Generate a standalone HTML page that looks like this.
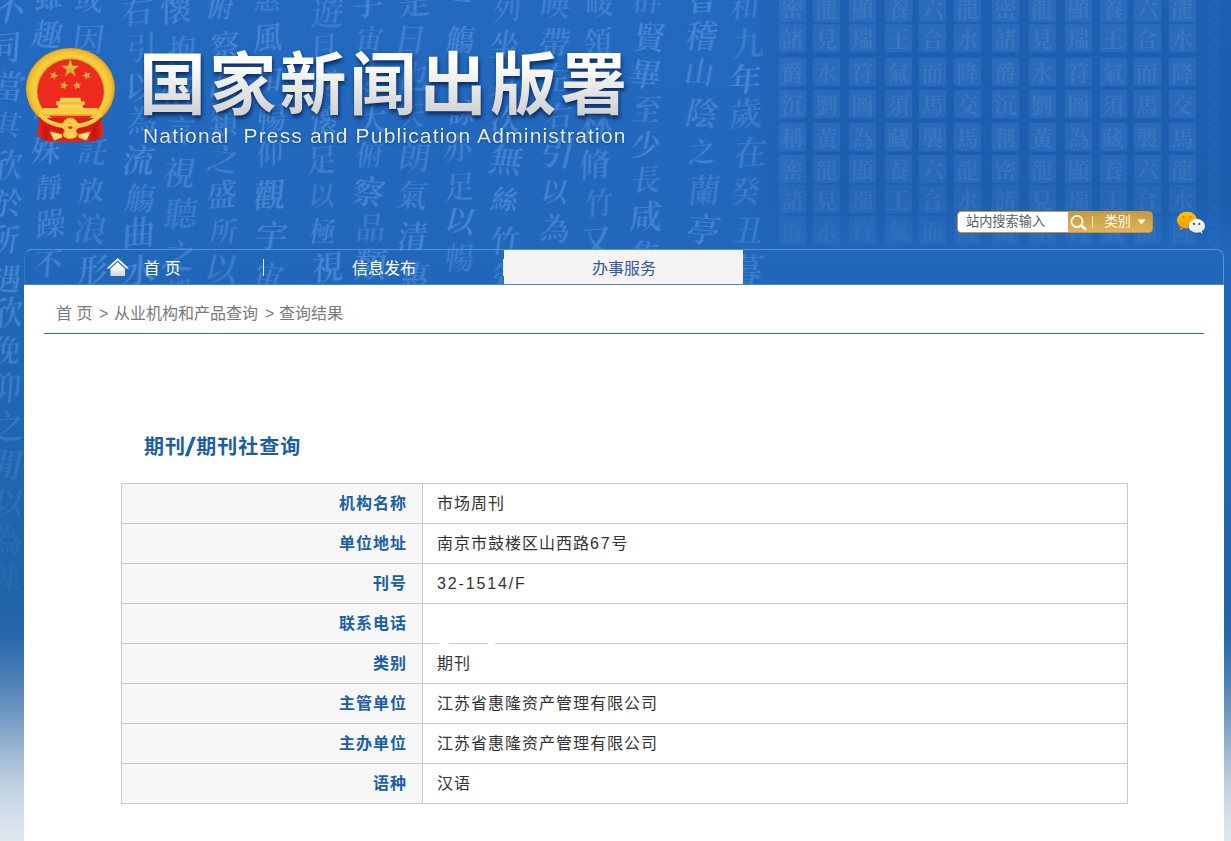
<!DOCTYPE html>
<html lang="zh-CN">
<head>
<meta charset="utf-8">
<title>国家新闻出版署</title>
<style>
*{box-sizing:border-box;margin:0;padding:0}
html,body{width:1231px;height:841px;overflow:hidden;background:#2065b8}
body{font-family:"Liberation Sans","Noto Sans CJK SC",sans-serif;position:relative;color:#333}
#bg{position:absolute;left:0;top:0;width:1231px;height:841px;overflow:hidden;
 background:linear-gradient(to bottom,#2369bf 0px,#2167ba 250px,#2065b0 450px,#2163a9 605px,#2766aa 632px,#3872b0 657px,#5384b8 686px,#7299c3 715px,#93b0cf 743px,#b2c7dc 772px,#cbd8e6 800px,#e1e7f0 841px)}
#shade{position:absolute;left:750px;top:0;width:481px;height:250px;background:linear-gradient(to right,rgba(10,50,120,0),rgba(10,50,120,.18) 12%,rgba(10,50,120,.18));-webkit-mask-image:linear-gradient(to bottom,#000 80%,transparent);mask-image:linear-gradient(to bottom,#000 80%,transparent)}
.c{position:absolute;width:34px;height:38px;font-style:normal;font-family:"Noto Serif CJK TC","Noto Serif CJK SC",serif;font-weight:600;line-height:38px;color:#78aff5;text-align:center;filter:blur(.7px)}
.seal{position:absolute;width:27px;height:28px;border-radius:2px;background:rgba(110,165,240,.17);box-shadow:0 0 2px 1px rgba(80,140,220,.10);font-family:"Noto Serif CJK TC","Noto Serif CJK SC",serif;font-weight:700;font-size:22px;line-height:27px;text-align:center;color:rgba(190,215,250,.11);overflow:hidden;filter:blur(.45px)}
#logo{position:absolute;left:24px;top:46px}
#title{position:absolute;left:139px;top:37.5px;font-size:67px;font-weight:700;letter-spacing:3.2px;transform:scaleY(1.02);transform-origin:0 77px;line-height:96px;white-space:nowrap;
 background:linear-gradient(to bottom,#ffffff 26%,#cbcbcb 86%);-webkit-background-clip:text;background-clip:text;color:#f2f2f2;-webkit-text-fill-color:transparent;
 filter:drop-shadow(1px 3px 2px rgba(0,15,60,.72))}
#sub{position:absolute;left:143px;top:122px;font-size:21px;letter-spacing:1.175px;line-height:28px;white-space:pre;background:linear-gradient(to bottom,#ffffff 30%,#d2d6dc 78%);-webkit-background-clip:text;background-clip:text;color:#f2f2f2;-webkit-text-fill-color:transparent;filter:drop-shadow(0 1px 1px rgba(0,20,70,.4))}
#search{position:absolute;left:957px;top:211px;width:196px;height:22px;border-radius:4px;background:linear-gradient(to bottom,#c89b3f,#e2b356);overflow:hidden;border:1px solid #c4963a}
#search .in{position:absolute;left:0;top:0;width:110px;height:20px;background:#fff;font-size:13.2px;line-height:20px;color:#5a5a5a;padding-left:8px;border-radius:3px 0 0 3px}
#search .cat{position:absolute;left:146.5px;top:0;font-size:13.2px;line-height:20px;color:#fff}
#search svg{position:absolute;left:110px;top:0}
#deco{position:absolute;left:1207px;top:0;width:13px;height:250px;background:radial-gradient(circle at 6.5px 6.5px,rgba(120,175,245,0) 2px,rgba(120,175,245,.08) 3px,rgba(120,175,245,.08) 5px,rgba(120,175,245,.03) 6.5px);background-size:13px 13px;filter:blur(1px)}
#wx{position:absolute;left:1174px;top:208px}
#nav{position:absolute;left:24px;top:249px;width:1200px;height:36px;border:1px solid #5592dc;border-left-color:rgba(85,146,220,.35);border-bottom:0;border-radius:8px 8px 0 0}
#navline{position:absolute;left:24px;top:284px;width:1200px;height:1px;background:#4a86cf}
#nav .it{position:absolute;top:0;height:35px;width:240px;text-align:center;font-size:16px;line-height:37px;color:#fff;white-space:pre}
#nav .act{background:#f5f3f4;color:#2d57aa;line-height:37px}
#nav .sep{position:absolute;top:9px;width:1px;height:17px;background:#e8eef8}
#nav svg{position:absolute;left:79.8px;top:7px}
#main{position:absolute;left:24px;top:285px;width:1200px;height:556px;background:#fff}
#crumb span{position:absolute;top:18px;font-size:16px;line-height:22px;color:#7a7a7a;white-space:pre}
#rule{position:absolute;left:20px;top:48px;width:1160px;height:1px;background:#2f6db6}
h2{position:absolute;left:120px;top:147px;font-size:20px;line-height:30px;font-weight:700;letter-spacing:1px;color:#1b5ea6;white-space:nowrap}
table{position:absolute;left:97px;top:198px;width:1007px;border-collapse:collapse;table-layout:fixed}
th,td{border:1px solid #cacaca;height:40px;font-size:16px;letter-spacing:1px;line-height:22px;vertical-align:middle}
th{width:301px;background:#f7f7f7;color:#1a5faa;font-weight:700;text-align:right;padding-right:15px}
td{padding-left:14px;color:#333;text-align:left}
td .w{letter-spacing:1.85px}
</style>
</head>
<body>
<div id="bg">
<i class="c" style="left:728px;top:-14px;font-size:29px;opacity:0.30;transform:rotate(-1.5deg) skewX(-8deg)">和</i>
<i class="c" style="left:731px;top:23px;font-size:33px;opacity:0.30;transform:rotate(-6.2deg) skewX(-8deg)">九</i>
<i class="c" style="left:729px;top:58px;font-size:32px;opacity:0.42;transform:rotate(-1.1deg) skewX(-8deg)">年</i>
<i class="c" style="left:729px;top:93px;font-size:33px;opacity:0.30;transform:rotate(-5.3deg) skewX(-8deg)">歲</i>
<i class="c" style="left:734px;top:132px;font-size:33px;opacity:0.30;transform:rotate(-1.4deg) skewX(-8deg)">在</i>
<i class="c" style="left:729px;top:171px;font-size:29px;opacity:0.30;transform:rotate(-2.9deg) skewX(-8deg)">癸</i>
<i class="c" style="left:732px;top:210px;font-size:30px;opacity:0.30;transform:rotate(0.8deg) skewX(-8deg)">丑</i>
<i class="c" style="left:730px;top:249px;font-size:33px;opacity:0.30;transform:rotate(1.9deg) skewX(-8deg)">暮</i>
<i class="c" style="left:686px;top:-23px;font-size:33px;opacity:0.42;transform:rotate(-4.1deg) skewX(-8deg)">會</i>
<i class="c" style="left:685px;top:15px;font-size:32px;opacity:0.38;transform:rotate(1.2deg) skewX(-8deg)">稽</i>
<i class="c" style="left:683px;top:52px;font-size:29px;opacity:0.38;transform:rotate(2.8deg) skewX(-8deg)">山</i>
<i class="c" style="left:686px;top:92px;font-size:32px;opacity:0.38;transform:rotate(5.3deg) skewX(-8deg)">陰</i>
<i class="c" style="left:685px;top:132px;font-size:27px;opacity:0.38;transform:rotate(-5.3deg) skewX(-8deg)">之</i>
<i class="c" style="left:688px;top:169px;font-size:32px;opacity:0.30;transform:rotate(-1.1deg) skewX(-8deg)">蘭</i>
<i class="c" style="left:687px;top:209px;font-size:33px;opacity:0.38;transform:rotate(4.0deg) skewX(-8deg)">亭</i>
<i class="c" style="left:685px;top:250px;font-size:30px;opacity:0.42;transform:rotate(1.3deg) skewX(-8deg)">脩</i>
<i class="c" style="left:631px;top:-22px;font-size:30px;opacity:0.30;transform:rotate(-0.4deg) skewX(-8deg)">群</i>
<i class="c" style="left:633px;top:17px;font-size:30px;opacity:0.42;transform:rotate(2.1deg) skewX(-8deg)">賢</i>
<i class="c" style="left:629px;top:53px;font-size:32px;opacity:0.42;transform:rotate(5.4deg) skewX(-8deg)">畢</i>
<i class="c" style="left:630px;top:89px;font-size:29px;opacity:0.34;transform:rotate(1.6deg) skewX(-8deg)">至</i>
<i class="c" style="left:629px;top:125px;font-size:29px;opacity:0.42;transform:rotate(3.3deg) skewX(-8deg)">少</i>
<i class="c" style="left:630px;top:159px;font-size:29px;opacity:0.34;transform:rotate(-0.7deg) skewX(-8deg)">長</i>
<i class="c" style="left:629px;top:196px;font-size:33px;opacity:0.38;transform:rotate(-3.1deg) skewX(-8deg)">咸</i>
<i class="c" style="left:628px;top:235px;font-size:32px;opacity:0.34;transform:rotate(6.4deg) skewX(-8deg)">集</i>
<i class="c" style="left:583px;top:-17px;font-size:29px;opacity:0.34;transform:rotate(-6.8deg) skewX(-8deg)">峻</i>
<i class="c" style="left:581px;top:22px;font-size:30px;opacity:0.38;transform:rotate(-6.9deg) skewX(-8deg)">領</i>
<i class="c" style="left:579px;top:63px;font-size:33px;opacity:0.30;transform:rotate(-2.5deg) skewX(-8deg)">茂</i>
<i class="c" style="left:580px;top:103px;font-size:33px;opacity:0.30;transform:rotate(-1.5deg) skewX(-8deg)">林</i>
<i class="c" style="left:578px;top:143px;font-size:32px;opacity:0.34;transform:rotate(-6.1deg) skewX(-8deg)">脩</i>
<i class="c" style="left:582px;top:183px;font-size:29px;opacity:0.30;transform:rotate(-5.5deg) skewX(-8deg)">竹</i>
<i class="c" style="left:579px;top:220px;font-size:33px;opacity:0.38;transform:rotate(-4.9deg) skewX(-8deg)">又</i>
<i class="c" style="left:579px;top:261px;font-size:27px;opacity:0.42;transform:rotate(-6.0deg) skewX(-8deg)">有</i>
<i class="c" style="left:539px;top:-16px;font-size:30px;opacity:0.30;transform:rotate(1.4deg) skewX(-8deg)">暎</i>
<i class="c" style="left:538px;top:22px;font-size:32px;opacity:0.34;transform:rotate(-0.3deg) skewX(-8deg)">帶</i>
<i class="c" style="left:539px;top:57px;font-size:30px;opacity:0.34;transform:rotate(3.4deg) skewX(-8deg)">左</i>
<i class="c" style="left:542px;top:96px;font-size:27px;opacity:0.38;transform:rotate(-4.1deg) skewX(-8deg)">右</i>
<i class="c" style="left:541px;top:132px;font-size:33px;opacity:0.38;transform:rotate(5.8deg) skewX(-8deg)">引</i>
<i class="c" style="left:538px;top:172px;font-size:27px;opacity:0.38;transform:rotate(2.7deg) skewX(-8deg)">以</i>
<i class="c" style="left:539px;top:208px;font-size:30px;opacity:0.38;transform:rotate(3.8deg) skewX(-8deg)">為</i>
<i class="c" style="left:541px;top:248px;font-size:29px;opacity:0.34;transform:rotate(1.6deg) skewX(-8deg)">流</i>
<i class="c" style="left:490px;top:-12px;font-size:29px;opacity:0.30;transform:rotate(-4.2deg) skewX(-8deg)">列</i>
<i class="c" style="left:488px;top:24px;font-size:30px;opacity:0.38;transform:rotate(-0.4deg) skewX(-8deg)">坐</i>
<i class="c" style="left:489px;top:63px;font-size:30px;opacity:0.34;transform:rotate(6.4deg) skewX(-8deg)">其</i>
<i class="c" style="left:489px;top:99px;font-size:29px;opacity:0.42;transform:rotate(-0.4deg) skewX(-8deg)">次</i>
<i class="c" style="left:490px;top:139px;font-size:33px;opacity:0.38;transform:rotate(4.8deg) skewX(-8deg)">無</i>
<i class="c" style="left:488px;top:180px;font-size:27px;opacity:0.42;transform:rotate(4.7deg) skewX(-8deg)">絲</i>
<i class="c" style="left:488px;top:221px;font-size:29px;opacity:0.38;transform:rotate(-0.3deg) skewX(-8deg)">竹</i>
<i class="c" style="left:491px;top:257px;font-size:32px;opacity:0.30;transform:rotate(-0.5deg) skewX(-8deg)">管</i>
<i class="c" style="left:440px;top:-19px;font-size:29px;opacity:0.42;transform:rotate(6.9deg) skewX(-8deg)">一</i>
<i class="c" style="left:444px;top:20px;font-size:29px;opacity:0.42;transform:rotate(1.6deg) skewX(-8deg)">觴</i>
<i class="c" style="left:443px;top:59px;font-size:30px;opacity:0.30;transform:rotate(-4.8deg) skewX(-8deg)">一</i>
<i class="c" style="left:446px;top:93px;font-size:27px;opacity:0.42;transform:rotate(0.4deg) skewX(-8deg)">詠</i>
<i class="c" style="left:441px;top:128px;font-size:29px;opacity:0.34;transform:rotate(-6.6deg) skewX(-8deg)">亦</i>
<i class="c" style="left:443px;top:166px;font-size:30px;opacity:0.34;transform:rotate(-3.4deg) skewX(-8deg)">足</i>
<i class="c" style="left:444px;top:200px;font-size:30px;opacity:0.42;transform:rotate(5.6deg) skewX(-8deg)">以</i>
<i class="c" style="left:443px;top:238px;font-size:29px;opacity:0.30;transform:rotate(0.4deg) skewX(-8deg)">暢</i>
<i class="c" style="left:398px;top:-19px;font-size:33px;opacity:0.34;transform:rotate(-6.9deg) skewX(-8deg)">是</i>
<i class="c" style="left:394px;top:18px;font-size:32px;opacity:0.30;transform:rotate(1.7deg) skewX(-8deg)">日</i>
<i class="c" style="left:396px;top:56px;font-size:33px;opacity:0.30;transform:rotate(0.4deg) skewX(-8deg)">也</i>
<i class="c" style="left:395px;top:96px;font-size:27px;opacity:0.30;transform:rotate(-3.5deg) skewX(-8deg)">天</i>
<i class="c" style="left:398px;top:136px;font-size:32px;opacity:0.30;transform:rotate(0.9deg) skewX(-8deg)">朗</i>
<i class="c" style="left:396px;top:175px;font-size:30px;opacity:0.34;transform:rotate(1.6deg) skewX(-8deg)">氣</i>
<i class="c" style="left:396px;top:216px;font-size:30px;opacity:0.42;transform:rotate(-0.7deg) skewX(-8deg)">清</i>
<i class="c" style="left:398px;top:256px;font-size:29px;opacity:0.38;transform:rotate(2.8deg) skewX(-8deg)">惠</i>
<i class="c" style="left:351px;top:-18px;font-size:32px;opacity:0.42;transform:rotate(-5.1deg) skewX(-8deg)">宇</i>
<i class="c" style="left:353px;top:19px;font-size:27px;opacity:0.34;transform:rotate(2.4deg) skewX(-8deg)">宙</i>
<i class="c" style="left:355px;top:59px;font-size:30px;opacity:0.34;transform:rotate(4.0deg) skewX(-8deg)">之</i>
<i class="c" style="left:355px;top:99px;font-size:30px;opacity:0.42;transform:rotate(-5.0deg) skewX(-8deg)">大</i>
<i class="c" style="left:353px;top:135px;font-size:27px;opacity:0.34;transform:rotate(-1.4deg) skewX(-8deg)">俯</i>
<i class="c" style="left:352px;top:171px;font-size:32px;opacity:0.42;transform:rotate(6.9deg) skewX(-8deg)">察</i>
<i class="c" style="left:354px;top:207px;font-size:30px;opacity:0.30;transform:rotate(-2.5deg) skewX(-8deg)">品</i>
<i class="c" style="left:354px;top:244px;font-size:33px;opacity:0.42;transform:rotate(-0.6deg) skewX(-8deg)">類</i>
<i class="c" style="left:311px;top:-8px;font-size:33px;opacity:0.30;transform:rotate(-2.9deg) skewX(-8deg)">遊</i>
<i class="c" style="left:307px;top:27px;font-size:27px;opacity:0.34;transform:rotate(-5.8deg) skewX(-8deg)">目</i>
<i class="c" style="left:310px;top:63px;font-size:29px;opacity:0.38;transform:rotate(4.5deg) skewX(-8deg)">騁</i>
<i class="c" style="left:308px;top:100px;font-size:29px;opacity:0.42;transform:rotate(0.5deg) skewX(-8deg)">懷</i>
<i class="c" style="left:305px;top:139px;font-size:30px;opacity:0.34;transform:rotate(-5.7deg) skewX(-8deg)">足</i>
<i class="c" style="left:305px;top:176px;font-size:27px;opacity:0.30;transform:rotate(-3.2deg) skewX(-8deg)">以</i>
<i class="c" style="left:306px;top:212px;font-size:27px;opacity:0.38;transform:rotate(1.5deg) skewX(-8deg)">極</i>
<i class="c" style="left:311px;top:246px;font-size:32px;opacity:0.42;transform:rotate(-6.8deg) skewX(-8deg)">視</i>
<i class="c" style="left:251px;top:-20px;font-size:27px;opacity:0.30;transform:rotate(0.4deg) skewX(-8deg)">惠</i>
<i class="c" style="left:251px;top:17px;font-size:30px;opacity:0.38;transform:rotate(-6.3deg) skewX(-8deg)">風</i>
<i class="c" style="left:251px;top:58px;font-size:30px;opacity:0.42;transform:rotate(0.4deg) skewX(-8deg)">和</i>
<i class="c" style="left:255px;top:98px;font-size:29px;opacity:0.38;transform:rotate(-3.2deg) skewX(-8deg)">暢</i>
<i class="c" style="left:253px;top:134px;font-size:27px;opacity:0.34;transform:rotate(-6.7deg) skewX(-8deg)">仰</i>
<i class="c" style="left:253px;top:174px;font-size:32px;opacity:0.42;transform:rotate(-3.6deg) skewX(-8deg)">觀</i>
<i class="c" style="left:255px;top:215px;font-size:32px;opacity:0.38;transform:rotate(0.6deg) skewX(-8deg)">宇</i>
<i class="c" style="left:252px;top:256px;font-size:29px;opacity:0.34;transform:rotate(6.8deg) skewX(-8deg)">宙</i>
<i class="c" style="left:204px;top:-13px;font-size:27px;opacity:0.38;transform:rotate(4.7deg) skewX(-8deg)">俯</i>
<i class="c" style="left:208px;top:25px;font-size:29px;opacity:0.42;transform:rotate(-6.2deg) skewX(-8deg)">察</i>
<i class="c" style="left:208px;top:64px;font-size:30px;opacity:0.30;transform:rotate(1.4deg) skewX(-8deg)">品</i>
<i class="c" style="left:207px;top:102px;font-size:29px;opacity:0.38;transform:rotate(-4.8deg) skewX(-8deg)">類</i>
<i class="c" style="left:207px;top:139px;font-size:30px;opacity:0.34;transform:rotate(6.6deg) skewX(-8deg)">之</i>
<i class="c" style="left:205px;top:174px;font-size:30px;opacity:0.38;transform:rotate(-3.9deg) skewX(-8deg)">盛</i>
<i class="c" style="left:207px;top:212px;font-size:27px;opacity:0.34;transform:rotate(-0.4deg) skewX(-8deg)">所</i>
<i class="c" style="left:205px;top:248px;font-size:33px;opacity:0.30;transform:rotate(3.9deg) skewX(-8deg)">以</i>
<i class="c" style="left:159px;top:-12px;font-size:33px;opacity:0.38;transform:rotate(-6.4deg) skewX(-8deg)">懷</i>
<i class="c" style="left:165px;top:30px;font-size:29px;opacity:0.34;transform:rotate(-5.8deg) skewX(-8deg)">抱</i>
<i class="c" style="left:161px;top:72px;font-size:33px;opacity:0.42;transform:rotate(-1.5deg) skewX(-8deg)">悟</i>
<i class="c" style="left:163px;top:110px;font-size:30px;opacity:0.30;transform:rotate(3.1deg) skewX(-8deg)">言</i>
<i class="c" style="left:163px;top:152px;font-size:33px;opacity:0.34;transform:rotate(1.8deg) skewX(-8deg)">視</i>
<i class="c" style="left:164px;top:193px;font-size:33px;opacity:0.30;transform:rotate(1.0deg) skewX(-8deg)">聽</i>
<i class="c" style="left:163px;top:235px;font-size:33px;opacity:0.34;transform:rotate(4.2deg) skewX(-8deg)">之</i>
<i class="c" style="left:163px;top:272px;font-size:27px;opacity:0.30;transform:rotate(-6.4deg) skewX(-8deg)">娛</i>
<i class="c" style="left:120px;top:-10px;font-size:33px;opacity:0.34;transform:rotate(-6.3deg) skewX(-8deg)">右</i>
<i class="c" style="left:125px;top:27px;font-size:30px;opacity:0.30;transform:rotate(-7.0deg) skewX(-8deg)">引</i>
<i class="c" style="left:124px;top:66px;font-size:33px;opacity:0.38;transform:rotate(-6.1deg) skewX(-8deg)">以</i>
<i class="c" style="left:125px;top:100px;font-size:30px;opacity:0.34;transform:rotate(-3.7deg) skewX(-8deg)">為</i>
<i class="c" style="left:122px;top:139px;font-size:32px;opacity:0.42;transform:rotate(-0.1deg) skewX(-8deg)">流</i>
<i class="c" style="left:124px;top:178px;font-size:30px;opacity:0.34;transform:rotate(3.7deg) skewX(-8deg)">觴</i>
<i class="c" style="left:122px;top:212px;font-size:33px;opacity:0.38;transform:rotate(-4.9deg) skewX(-8deg)">曲</i>
<i class="c" style="left:123px;top:250px;font-size:33px;opacity:0.42;transform:rotate(-5.1deg) skewX(-8deg)">水</i>
<i class="c" style="left:73px;top:-21px;font-size:29px;opacity:0.38;transform:rotate(2.5deg) skewX(-8deg)">或</i>
<i class="c" style="left:72px;top:18px;font-size:32px;opacity:0.34;transform:rotate(-0.5deg) skewX(-8deg)">因</i>
<i class="c" style="left:71px;top:56px;font-size:27px;opacity:0.42;transform:rotate(6.1deg) skewX(-8deg)">寄</i>
<i class="c" style="left:74px;top:92px;font-size:33px;opacity:0.38;transform:rotate(6.6deg) skewX(-8deg)">所</i>
<i class="c" style="left:77px;top:131px;font-size:29px;opacity:0.30;transform:rotate(5.8deg) skewX(-8deg)">託</i>
<i class="c" style="left:74px;top:171px;font-size:27px;opacity:0.38;transform:rotate(-5.0deg) skewX(-8deg)">放</i>
<i class="c" style="left:74px;top:208px;font-size:33px;opacity:0.30;transform:rotate(4.5deg) skewX(-8deg)">浪</i>
<i class="c" style="left:76px;top:249px;font-size:30px;opacity:0.42;transform:rotate(-3.8deg) skewX(-8deg)">形</i>
<i class="c" style="left:32px;top:-24px;font-size:29px;opacity:0.42;transform:rotate(-6.9deg) skewX(-8deg)">雖</i>
<i class="c" style="left:31px;top:14px;font-size:30px;opacity:0.42;transform:rotate(3.2deg) skewX(-8deg)">趣</i>
<i class="c" style="left:29px;top:51px;font-size:27px;opacity:0.38;transform:rotate(4.8deg) skewX(-8deg)">舍</i>
<i class="c" style="left:30px;top:89px;font-size:27px;opacity:0.30;transform:rotate(6.2deg) skewX(-8deg)">萬</i>
<i class="c" style="left:29px;top:129px;font-size:30px;opacity:0.42;transform:rotate(-3.5deg) skewX(-8deg)">殊</i>
<i class="c" style="left:32px;top:168px;font-size:27px;opacity:0.38;transform:rotate(-2.0deg) skewX(-8deg)">靜</i>
<i class="c" style="left:34px;top:203px;font-size:30px;opacity:0.38;transform:rotate(-5.6deg) skewX(-8deg)">躁</i>
<i class="c" style="left:31px;top:243px;font-size:29px;opacity:0.38;transform:rotate(-3.5deg) skewX(-8deg)">不</i>
<i class="c" style="left:-7px;top:-13px;font-size:32px;opacity:0.42;transform:rotate(5.4deg) skewX(-8deg)">不</i>
<i class="c" style="left:-12px;top:27px;font-size:33px;opacity:0.42;transform:rotate(-4.2deg) skewX(-8deg)">同</i>
<i class="c" style="left:-8px;top:66px;font-size:33px;opacity:0.38;transform:rotate(3.5deg) skewX(-8deg)">當</i>
<i class="c" style="left:-9px;top:105px;font-size:27px;opacity:0.34;transform:rotate(5.8deg) skewX(-8deg)">其</i>
<i class="c" style="left:-10px;top:144px;font-size:32px;opacity:0.38;transform:rotate(-2.2deg) skewX(-8deg)">欣</i>
<i class="c" style="left:-9px;top:183px;font-size:29px;opacity:0.42;transform:rotate(-2.8deg) skewX(-8deg)">於</i>
<i class="c" style="left:-12px;top:219px;font-size:29px;opacity:0.42;transform:rotate(2.0deg) skewX(-8deg)">所</i>
<i class="c" style="left:-10px;top:259px;font-size:29px;opacity:0.42;transform:rotate(-0.7deg) skewX(-8deg)">遇</i>
<i class="c" style="left:-10px;top:292px;font-size:33px;opacity:0.38;transform:rotate(-4.3deg) skewX(-8deg)">欣</i>
<i class="c" style="left:-11px;top:330px;font-size:29px;opacity:0.34;transform:rotate(-2.2deg) skewX(-8deg)">俛</i>
<i class="c" style="left:-11px;top:368px;font-size:31px;opacity:0.29;transform:rotate(-3.7deg) skewX(-8deg)">仰</i>
<i class="c" style="left:-9px;top:406px;font-size:33px;opacity:0.24;transform:rotate(-4.2deg) skewX(-8deg)">之</i>
<i class="c" style="left:-11px;top:444px;font-size:33px;opacity:0.20;transform:rotate(5.2deg) skewX(-8deg)">閒</i>
<i class="c" style="left:-8px;top:482px;font-size:31px;opacity:0.16;transform:rotate(3.4deg) skewX(-8deg)">以</i>
<i class="c" style="left:-10px;top:520px;font-size:31px;opacity:0.11;transform:rotate(-3.2deg) skewX(-8deg)">為</i>
<i class="c" style="left:-11px;top:558px;font-size:31px;opacity:0.07;transform:rotate(-3.1deg) skewX(-8deg)">陳</i>
<div id="shade"></div>
<div class="seal" style="left:779.0px;top:-6px">密</div>
<div class="seal" style="left:813.0px;top:-6px">龍</div>
<div class="seal" style="left:849.0px;top:-6px">顯</div>
<div class="seal" style="left:885.0px;top:-6px">養</div>
<div class="seal" style="left:919.0px;top:-6px">六</div>
<div class="seal" style="left:954.0px;top:-6px">龍</div>
<div class="seal" style="left:992.0px;top:-6px">密</div>
<div class="seal" style="left:1028.5px;top:-6px">龍</div>
<div class="seal" style="left:1065.0px;top:-6px">顯</div>
<div class="seal" style="left:1099.5px;top:-6px">養</div>
<div class="seal" style="left:1133.5px;top:-6px">六</div>
<div class="seal" style="left:1169.0px;top:-6px">龍</div>
<div class="seal" style="left:779.0px;top:24px">諸</div>
<div class="seal" style="left:813.0px;top:24px">見</div>
<div class="seal" style="left:849.0px;top:24px">瑞</div>
<div class="seal" style="left:885.0px;top:24px">王</div>
<div class="seal" style="left:919.0px;top:24px">合</div>
<div class="seal" style="left:954.0px;top:24px">水</div>
<div class="seal" style="left:992.0px;top:24px">諸</div>
<div class="seal" style="left:1028.5px;top:24px">見</div>
<div class="seal" style="left:1065.0px;top:24px">瑞</div>
<div class="seal" style="left:1099.5px;top:24px">王</div>
<div class="seal" style="left:1133.5px;top:24px">合</div>
<div class="seal" style="left:1169.0px;top:24px">水</div>
<div class="seal" style="left:779.0px;top:58px">爵</div>
<div class="seal" style="left:813.0px;top:58px">水</div>
<div class="seal" style="left:849.0px;top:58px">符</div>
<div class="seal" style="left:885.0px;top:58px">氣</div>
<div class="seal" style="left:919.0px;top:58px">而</div>
<div class="seal" style="left:954.0px;top:58px">降</div>
<div class="seal" style="left:992.0px;top:58px">爵</div>
<div class="seal" style="left:1028.5px;top:58px">水</div>
<div class="seal" style="left:1065.0px;top:58px">符</div>
<div class="seal" style="left:1099.5px;top:58px">氣</div>
<div class="seal" style="left:1133.5px;top:58px">而</div>
<div class="seal" style="left:1169.0px;top:58px">降</div>
<div class="seal" style="left:779.0px;top:90px">沉</div>
<div class="seal" style="left:813.0px;top:90px">劉</div>
<div class="seal" style="left:849.0px;top:90px">圖</div>
<div class="seal" style="left:885.0px;top:90px">須</div>
<div class="seal" style="left:919.0px;top:90px">馬</div>
<div class="seal" style="left:954.0px;top:90px">交</div>
<div class="seal" style="left:992.0px;top:90px">沉</div>
<div class="seal" style="left:1028.5px;top:90px">劉</div>
<div class="seal" style="left:1065.0px;top:90px">圖</div>
<div class="seal" style="left:1099.5px;top:90px">須</div>
<div class="seal" style="left:1133.5px;top:90px">馬</div>
<div class="seal" style="left:1169.0px;top:90px">交</div>
<div class="seal" style="left:779.0px;top:123px">稱</div>
<div class="seal" style="left:813.0px;top:123px">黃</div>
<div class="seal" style="left:849.0px;top:123px">為</div>
<div class="seal" style="left:885.0px;top:123px">藏</div>
<div class="seal" style="left:919.0px;top:123px">襲</div>
<div class="seal" style="left:954.0px;top:123px">馬</div>
<div class="seal" style="left:992.0px;top:123px">稱</div>
<div class="seal" style="left:1028.5px;top:123px">黃</div>
<div class="seal" style="left:1065.0px;top:123px">為</div>
<div class="seal" style="left:1099.5px;top:123px">藏</div>
<div class="seal" style="left:1133.5px;top:123px">襲</div>
<div class="seal" style="left:1169.0px;top:123px">馬</div>
<div class="seal" style="left:779.0px;top:155px;opacity:0.90">密</div>
<div class="seal" style="left:813.0px;top:155px;opacity:0.90">龍</div>
<div class="seal" style="left:849.0px;top:155px;opacity:0.90">顯</div>
<div class="seal" style="left:885.0px;top:155px;opacity:0.90">養</div>
<div class="seal" style="left:919.0px;top:155px;opacity:0.90">六</div>
<div class="seal" style="left:954.0px;top:155px;opacity:0.90">龍</div>
<div class="seal" style="left:992.0px;top:155px;opacity:0.90">密</div>
<div class="seal" style="left:1028.5px;top:155px;opacity:0.90">龍</div>
<div class="seal" style="left:1065.0px;top:155px;opacity:0.90">顯</div>
<div class="seal" style="left:1099.5px;top:155px;opacity:0.90">養</div>
<div class="seal" style="left:1133.5px;top:155px;opacity:0.90">六</div>
<div class="seal" style="left:1169.0px;top:155px;opacity:0.90">龍</div>
<div class="seal" style="left:779.0px;top:185px;opacity:0.75">諸</div>
<div class="seal" style="left:813.0px;top:185px;opacity:0.75">見</div>
<div class="seal" style="left:849.0px;top:185px;opacity:0.75">瑞</div>
<div class="seal" style="left:885.0px;top:185px;opacity:0.75">王</div>
<div class="seal" style="left:919.0px;top:185px;opacity:0.75">合</div>
<div class="seal" style="left:954.0px;top:185px;opacity:0.75">水</div>
<div class="seal" style="left:992.0px;top:185px;opacity:0.75">諸</div>
<div class="seal" style="left:1028.5px;top:185px;opacity:0.75">見</div>
<div class="seal" style="left:1065.0px;top:185px;opacity:0.75">瑞</div>
<div class="seal" style="left:1099.5px;top:185px;opacity:0.75">王</div>
<div class="seal" style="left:1133.5px;top:185px;opacity:0.75">合</div>
<div class="seal" style="left:1169.0px;top:185px;opacity:0.75">水</div>
<div class="seal" style="left:779.0px;top:216px;opacity:0.55">爵</div>
<div class="seal" style="left:813.0px;top:216px;opacity:0.55">水</div>
<div class="seal" style="left:849.0px;top:216px;opacity:0.55">符</div>
<div class="seal" style="left:885.0px;top:216px;opacity:0.55">氣</div>
<div class="seal" style="left:919.0px;top:216px;opacity:0.55">而</div>
<div class="seal" style="left:954.0px;top:216px;opacity:0.55">降</div>
<div class="seal" style="left:992.0px;top:216px;opacity:0.55">爵</div>
<div class="seal" style="left:1028.5px;top:216px;opacity:0.55">水</div>
<div class="seal" style="left:1065.0px;top:216px;opacity:0.55">符</div>
<div class="seal" style="left:1099.5px;top:216px;opacity:0.55">氣</div>
<div class="seal" style="left:1133.5px;top:216px;opacity:0.55">而</div>
<div class="seal" style="left:1169.0px;top:216px;opacity:0.55">降</div>
<div id="deco"></div>
</div>
<svg id="logo" width="96" height="100" viewBox="24 46 96 100">
<defs><radialGradient id="gR" cx="50%" cy="50%" r="50%"><stop offset="0.70" stop-color="#e9a820"/><stop offset="0.80" stop-color="#f8d045"/><stop offset="0.93" stop-color="#f4bd2c"/><stop offset="1" stop-color="#e2a01c"/></radialGradient><linearGradient id="gS" x1="0" y1="0" x2="0" y2="1"><stop offset="0" stop-color="#f6d24a"/><stop offset="1" stop-color="#c99a1a"/></linearGradient><linearGradient id="gD" x1="0" y1="0" x2="1" y2="0"><stop offset="0" stop-color="#e8281c"/><stop offset="0.5" stop-color="#c8140f"/><stop offset="1" stop-color="#ea2a1e"/></linearGradient></defs>
<ellipse cx="70.4" cy="88.6" rx="44.5" ry="40.6" fill="url(#gR)"/>
<ellipse cx="70.6" cy="91.4" rx="33.6" ry="32.6" fill="#b98a18"/>
<ellipse cx="70.6" cy="91.6" rx="32.9" ry="32" fill="#ee2a1f"/>
<polygon points="70.30,59.30 72.53,65.73 79.34,65.86 73.91,69.97 75.88,76.49 70.30,72.60 64.72,76.49 66.69,69.97 61.26,65.86 68.07,65.73" fill="url(#gS)"/>
<polygon points="55.31,71.18 55.26,74.55 58.40,75.76 55.18,76.76 55.00,80.12 53.06,77.37 49.80,78.23 51.82,75.53 50.00,72.71 53.18,73.79" fill="url(#gS)"/>
<polygon points="85.19,71.18 87.32,73.79 90.50,72.71 88.68,75.53 90.70,78.23 87.44,77.37 85.50,80.12 85.32,76.76 82.10,75.76 85.24,74.55" fill="url(#gS)"/>
<polygon points="64.62,80.97 65.15,84.29 68.45,84.95 65.46,86.48 65.86,89.82 63.47,87.45 60.42,88.86 61.94,85.86 59.65,83.39 62.98,83.91" fill="url(#gS)"/>
<polygon points="76.28,80.97 77.92,83.91 81.25,83.39 78.96,85.86 80.48,88.86 77.43,87.45 75.04,89.82 75.44,86.48 72.45,84.95 75.75,84.29" fill="url(#gS)"/>
<path d="M60.2 97.8 h20.2 l0.6 3.6 h3.6 l0.4 3.4 h-2 v3.4 h-25.2 v-3.4 h-2 l0.4 -3.4 h3.4 z" fill="#f9d45c"/>
<rect x="56" y="101.6" width="28.6" height="3.1" fill="#f3bd35"/>
<rect x="43" y="108" width="54.6" height="7.4" fill="#f7cd42"/>
<rect x="43" y="114.2" width="54.6" height="1.3" fill="#f0b52c"/>
<path d="M40 118 H100.6 L103 134 L88 141.6 L70.3 141.8 L52.8 141.6 L37.8 134 Z" fill="#dc2016"/>
<path d="M39.6 115.2 L36.9 136.3 L40.4 137.2 L40.8 138.4 L44.2 139.4 L44.6 140.6 L52.8 142 L55 131.2 C48.5 127.8 43.4 122.2 39.6 115.2 Z" fill="url(#gD)"/>
<path d="M101 115.2 L103.9 136.3 L100.4 137.2 L100 138.4 L96.6 139.4 L96.2 140.6 L88 142 L85.6 131.2 C92.1 127.8 97.2 122.2 101 115.2 Z" fill="url(#gD)"/>
<path d="M55.8 141.6 L62 134.6 H78.6 L84.8 141.6 C80 142.2 75 141.4 70.3 142 C65.6 141.4 60.6 142.2 55.8 141.6 Z" fill="#e02418"/>
<path d="M39.8 115.4 C45.5 123.4 58 128.5 70.3 128.6 C82.6 128.5 95.1 123.4 100.8 115.4 L101.6 120.6 C95.5 128.4 83 133 70.3 133.1 C57.6 133 45.1 128.4 39 120.6 Z" fill="#d61a12"/>
<polygon points="78.70,125.60 77.47,127.03 78.06,128.81 76.38,129.66 76.24,131.54 74.36,131.68 73.51,133.36 71.73,132.77 70.30,134.00 68.87,132.77 67.09,133.36 66.24,131.68 64.36,131.54 64.22,129.66 62.54,128.81 63.13,127.03 61.90,125.60 63.13,124.17 62.54,122.39 64.22,121.54 64.36,119.66 66.24,119.52 67.09,117.84 68.87,118.43 70.30,117.20 71.73,118.43 73.51,117.84 74.36,119.52 76.24,119.66 76.38,121.54 78.06,122.39 77.47,124.17" fill="#f5c63c"/>
<circle cx="70.3" cy="125.6" r="5.4" fill="#f8d96a"/><circle cx="70.3" cy="125.6" r="3.8" fill="#f1ba34"/>
<path d="M40.6 113.2 C46.5 120.6 58.5 124.2 70.3 124.3 C82.1 124.2 94.1 120.6 100 113.2 L102.4 115.6 C96.2 124.4 83.2 128.6 70.3 128.7 C57.4 128.6 44.4 124.4 38.2 115.6 Z" fill="#f6c83c"/>
<path d="M40.6 113.2 C46.5 120.6 58.5 124.2 70.3 124.3 C82.1 124.2 94.1 120.6 100 113.2 L100.8 114 C94.6 121.6 82.4 125.4 70.3 125.5 C58.2 125.4 46 121.6 39.8 114 Z" fill="#fbe06a"/>
<ellipse cx="70.3" cy="127.6" rx="2.2" ry="1.4" fill="#e2281a"/>
<path d="M49.8 131.6 L62 134.4 L62 137.4 L54.2 140.6 Z" fill="#f9e07a"/>
<path d="M90.8 131.6 L78.6 134.4 L78.6 137.4 L86.4 140.6 Z" fill="#f9e07a"/>
<path d="M49.8 131.6 L62 134.4 L62 135.4 Z" fill="#f3c640"/><path d="M90.8 131.6 L78.6 134.4 L78.6 135.4 Z" fill="#f3c640"/>
<g transform="translate(70.3 134.4) scale(1 0.6) translate(-70.3 -134.4)"><polygon points="78.20,134.40 77.04,135.74 77.60,137.42 76.01,138.22 75.89,139.99 74.12,140.11 73.32,141.70 71.64,141.14 70.30,142.30 68.96,141.14 67.28,141.70 66.48,140.11 64.71,139.99 64.59,138.22 63.00,137.42 63.56,135.74 62.40,134.40 63.56,133.06 63.00,131.38 64.59,130.58 64.71,128.81 66.48,128.69 67.28,127.10 68.96,127.66 70.30,126.50 71.64,127.66 73.32,127.10 74.12,128.69 75.89,128.81 76.01,130.58 77.60,131.38 77.04,133.06" fill="#f4c63e"/><circle cx="70.3" cy="134.4" r="5" fill="#f7d258"/></g>
</svg>
<div id="title">国家新闻出版署</div>
<div id="sub">National  Press and Publication Administration</div>
<div id="search"><div class="in">站内搜索输入</div>
<svg width="36" height="20" viewBox="0 0 36 20"><circle cx="9" cy="9.5" r="5.6" fill="none" stroke="#fff" stroke-width="1.7"/><path d="M13.2 13.6 L17.2 17" stroke="#fff" stroke-width="2.6" stroke-linecap="round"/><rect x="24" y="4" width="1" height="12" fill="#fff"/></svg>
<div class="cat">类别</div>
<svg style="left:178px" width="14" height="20" viewBox="0 0 14 20"><path d="M1.5 7.5h8l-4 5z" fill="#fff"/></svg>
</div>
<svg id="wx" width="36" height="30" viewBox="1174 208 36 30">
<defs><linearGradient id="wO" x1="0" y1="0" x2="0" y2="1"><stop offset="0" stop-color="#ffc400"/><stop offset="1" stop-color="#f59a00"/></linearGradient><linearGradient id="wW" x1="0" y1="0" x2="0" y2="1"><stop offset="0" stop-color="#ffffff"/><stop offset="1" stop-color="#e6e6e6"/></linearGradient></defs>
<path d="M1180.5 227.2 L1179.6 230.2 L1183.4 228.4 Z" fill="#f59a00"/>
<ellipse cx="1187" cy="220.2" rx="10.1" ry="8.4" fill="url(#wO)"/>
<circle cx="1183.5" cy="217.2" r="1.1" fill="#b88a10"/><circle cx="1190.4" cy="217.2" r="1.1" fill="#b88a10"/>
<ellipse cx="1196.9" cy="226.4" rx="8.6" ry="7.3" fill="#1a4f9a" opacity=".55"/>
<path d="M1199.5 231.6 L1202.4 234 L1201.8 230.6 Z" fill="#f0f0f0"/>
<ellipse cx="1196.8" cy="225.9" rx="8.2" ry="6.9" fill="url(#wW)"/>
<rect x="1193" y="223" width="1.8" height="1.9" fill="#2a4a8a"/><rect x="1198.4" y="223" width="1.8" height="1.9" fill="#2a4a8a"/>
</svg>
<div id="nav">
 <div class="it" style="left:-1px;width:239px;padding-left:37.6px;word-spacing:0.5px">首 页</div>
 <svg width="25.5" height="20" viewBox="0 0 24 20" preserveAspectRatio="none"><defs><linearGradient id="hg" x1="0" y1="0" x2="0" y2="1"><stop offset=".3" stop-color="#fff"/><stop offset="1" stop-color="#cfd3dc"/></linearGradient></defs><path d="M12 1 L22.6 11.6 H20.2 L12 3.5 L3.8 11.6 H1.4 Z" fill="#fff"/><path d="M12 5 L18.9 11.8 V19 H5.1 V11.8 Z" fill="url(#hg)"/></svg>
 <div class="sep" style="left:238px"></div>
 <div class="it" style="left:239px">信息发布</div>
 <div class="sep" style="left:478px"></div>
 <div class="it act" style="left:479px;width:239px;padding-left:1px">办事服务</div>
</div>
<div id="navline"></div>
<div id="main">
 <div id="crumb"><span style="left:32px">首 页</span><span style="left:75px">&gt;</span><span style="left:90px">从业机构和产品查询</span><span style="left:241px">&gt;</span><span style="left:255px">查询结果</span></div>
 <div id="rule"></div>
 <h2>期刊<span style="display:inline-block;font-size:26px;line-height:20px;transform:scaleX(1.4);margin:0 1px;vertical-align:-1.5px;font-weight:400;-webkit-text-stroke:.5px #1b5ea6">/</span>期刊社查询</h2>
 <table>
  <tr><th>机构名称</th><td>市场周刊</td></tr>
  <tr><th>单位地址</th><td>南京市鼓楼区山西路<span class="w">67</span>号</td></tr>
  <tr><th>刊号</th><td><span class="w">32-1514/F</span></td></tr>
  <tr><th>联系电话</th><td></td></tr>
  <tr><th>类别</th><td>期刊</td></tr>
  <tr><th>主管单位</th><td>江苏省惠隆资产管理有限公司</td></tr>
  <tr><th>主办单位</th><td>江苏省惠隆资产管理有限公司</td></tr>
  <tr><th>语种</th><td>汉语</td></tr>
 </table>
 <div style="position:absolute;left:415px;top:358px;width:10px;height:1px;background:#fff"></div>
 <div style="position:absolute;left:464px;top:358px;width:7px;height:1px;background:#fff"></div>
</div>
</body>
</html>
